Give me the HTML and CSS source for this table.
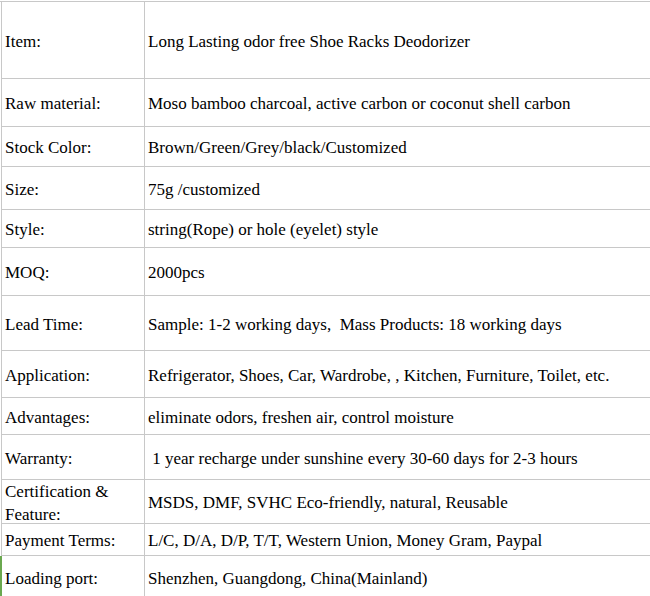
FILE: index.html
```html
<!DOCTYPE html>
<html>
<head>
<meta charset="utf-8">
<link rel="stylesheet" href="styles.css">
</head>
<body>
<div class="sheet">
  <div class="row r1"><div class="k">Item:</div><div class="v">Long Lasting odor free Shoe Racks Deodorizer</div></div>
  <div class="row r2"><div class="k">Raw material:</div><div class="v">Moso bamboo charcoal, active carbon or coconut shell carbon</div></div>
  <div class="row r3"><div class="k">Stock Color:</div><div class="v">Brown/Green/Grey/black/Customized</div></div>
  <div class="row r4"><div class="k">Size:</div><div class="v">75g /customized</div></div>
  <div class="row r5"><div class="k">Style:</div><div class="v">string(Rope) or hole (eyelet) style</div></div>
  <div class="row r6"><div class="k">MOQ:</div><div class="v">2000pcs</div></div>
  <div class="row r7"><div class="k">Lead Time:</div><div class="v">Sample: 1-2 working days,&nbsp; Mass Products: 18 working days</div></div>
  <div class="row r8"><div class="k">Application:</div><div class="v">Refrigerator, Shoes, Car, Wardrobe, , Kitchen, Furniture, Toilet, etc.</div></div>
  <div class="row r9"><div class="k">Advantages:</div><div class="v">eliminate odors, freshen air, control moisture</div></div>
  <div class="row r10"><div class="k">Warranty:</div><div class="v">&nbsp;1 year recharge under sunshine every 30-60 days for 2-3 hours</div></div>
  <div class="row r11"><div class="k">Certification &amp; Feature:</div><div class="v">MSDS, DMF, SVHC Eco-friendly, natural, Reusable</div></div>
  <div class="row r12"><div class="k">Payment Terms:</div><div class="v">L/C, D/A, D/P, T/T, Western Union, Money Gram, Paypal</div></div>
  <div class="row r13 active"><div class="k">Loading port:</div><div class="v">Shenzhen, Guangdong, China(Mainland)</div></div>
</div>
</body>
</html>
```

FILE: styles.css
```css
html, body {
  margin: 0;
  padding: 0;
  background: #fff;
  overflow: hidden;
}
body {
  width: 650px;
  height: 596px;
  font-family: "Liberation Serif", "Times New Roman", serif;
  font-size: 17px;
  color: #000;
}
.sheet {
  margin-top: 1px;
  border-top: 1px solid #c8c8c8;
}
.row {
  display: flex;
  box-sizing: border-box;
  margin-left: 1px;
  border-left: 1px solid #c8c8c8;
  border-bottom: 1px solid #c8c8c8;
}
.row.active {
  margin-left: 0;
  border-left: 2px solid #6aa84f;
}
.k, .v {
  display: flex;
  align-items: center;
  box-sizing: border-box;
  line-height: 23px;
  padding-top: 2px;
}
.k {
  width: 143px;
  flex: none;
  padding-left: 3px;
  padding-right: 2px;
  border-right: 1px solid #c8c8c8;
}
.v {
  flex: 1;
  min-width: 0;
  padding-left: 3px;
  white-space: nowrap;
  overflow: hidden;
}
.r1 { height: 77px; }
.r2 { height: 48px; }
.r3 { height: 40px; }
.r4 { height: 43px; }
.r5 { height: 38px; }
.r6 { height: 48px; }
.r7 { height: 55px; }
.r8 { height: 47px; }
.r9 { height: 37px; }
.r10 { height: 45px; }
.r11 { height: 44px; }
.r12 { height: 32px; }
.r13 { height: 44px; }
```
